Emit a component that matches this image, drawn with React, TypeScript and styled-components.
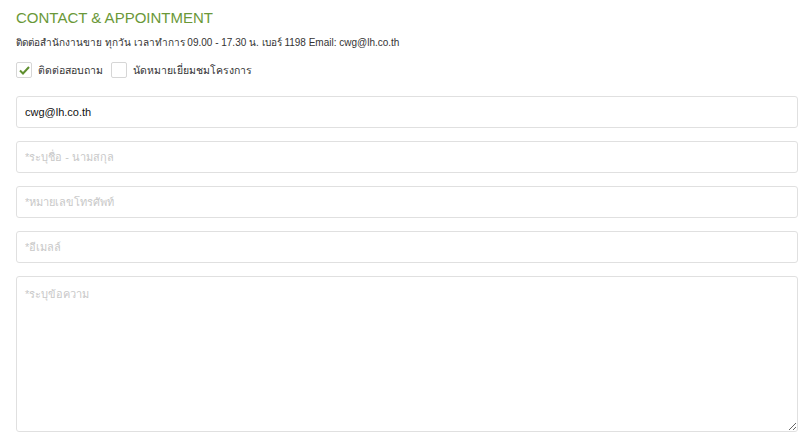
import styled, { createGlobalStyle } from 'styled-components';

const GlobalStyle = createGlobalStyle`
  body {
    margin: 0;
    background: #ffffff;
    font-family: 'Liberation Sans', Arial, 'Noto Sans', sans-serif;
  }
`;

const Page = styled.div`
  padding: 9px 2px 0 16px;
  display: flex;
  flex-direction: column;
`;

const Heading = styled.h2`
  margin: 0;
  color: #6a9838;
  font-size: 15px;
  font-weight: 400;
  line-height: 18px;
`;

const Info = styled.p`
  margin: 9px 0 0;
  color: #333333;
  font-size: 10px;
  line-height: 14px;
`;

const CheckRow = styled.div`
  display: flex;
  align-items: center;
  gap: 8px;
  margin-top: 12px;
  height: 16px;
`;

const CheckLabel = styled.label`
  display: inline-flex;
  align-items: center;
  gap: 6px;
  color: #333333;
  font-size: 10.5px;
  line-height: 16px;
`;

const Box = styled.span`
  box-sizing: border-box;
  width: 16px;
  height: 16px;
  border: 1px solid #d6d6d6;
  border-radius: 2px;
  background: #ffffff;
  display: inline-flex;
  align-items: center;
  justify-content: center;
`;

const Fields = styled.div`
  display: flex;
  flex-direction: column;
  gap: 13px;
  margin-top: 18px;
`;

const Input = styled.input`
  box-sizing: border-box;
  width: 100%;
  height: 32px;
  padding: 0 8px;
  border: 1px solid #e0e0e0;
  border-radius: 3px;
  font-family: inherit;
  font-size: 11px;
  color: #111111;
  outline: none;

  &::placeholder {
    color: #c8c8c8;
  }
`;

const TextArea = styled.textarea`
  box-sizing: border-box;
  width: 100%;
  height: 156px;
  padding: 8px;
  border: 1px solid #e0e0e0;
  border-radius: 3px;
  font-family: inherit;
  font-size: 11px;
  color: #111111;
  outline: none;
  resize: vertical;

  &::placeholder {
    color: #c8c8c8;
  }
`;

const Check = ({ checked, label }: { checked?: boolean; label: string }) => (
  <CheckLabel>
    <Box>
      {checked && (
        <svg width="11" height="9" viewBox="0 0 11 9">
          <path d="M1 4.5 L4 7.5 L10 1" fill="none" stroke="#5f8f2f" strokeWidth="2" />
        </svg>
      )}
    </Box>
    {label}
  </CheckLabel>
);

export default function App() {
  return (
    <>
      <GlobalStyle />
      <Page>
        <Heading>CONTACT &amp; APPOINTMENT</Heading>
        <Info>ติดต่อสำนักงานขาย ทุกวัน เวลาทำการ 09.00 - 17.30 น. เบอร์ 1198 Email: cwg@lh.co.th</Info>
        <CheckRow>
          <Check checked label="ติดต่อสอบถาม" />
          <Check label="นัดหมายเยี่ยมชมโครงการ" />
        </CheckRow>
        <Fields>
          <Input defaultValue="cwg@lh.co.th" />
          <Input placeholder="*ระบุชื่อ - นามสกุล" />
          <Input placeholder="*หมายเลขโทรศัพท์" />
          <Input placeholder="*อีเมลล์" />
          <TextArea placeholder="*ระบุข้อความ" />
        </Fields>
      </Page>
    </>
  );
}
